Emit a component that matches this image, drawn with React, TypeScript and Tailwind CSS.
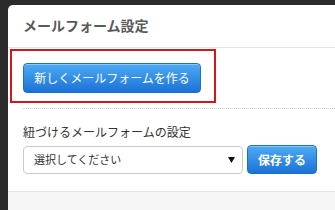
import React from 'react';

const font = { fontFamily: '"Noto Sans CJK JP", "Noto Sans", sans-serif' };

export default function App() {
  return (
    <div className="w-[335px] h-[210px] bg-[#2b2b2b] pl-[8px] pt-[5px] overflow-hidden" style={font}>
      <div className="bg-white rounded-tl-[5px] h-full flex flex-col">
        {/* Header */}
        <div className="h-[43px] shrink-0 border-b border-[#e5e5e5] pl-[15px] pb-[3px] flex items-center">
          <h3 className="text-[14px] font-bold text-[#5a5a5a] leading-none">メールフォーム設定</h3>
        </div>

        {/* Body */}
        <div className="flex-1 flex flex-col">
          <div className="ml-[2px] mt-[1px] w-[206px] h-[54px] border-2 border-[#d2161e] pl-[11px] pt-[12px]">
            <button className="w-[178px] h-[30px] rounded-[4px] border border-[#1f6fc5] bg-gradient-to-b from-[#4eaaf4] to-[#1a72d6] text-white text-[12px] leading-none shadow-[inset_0_1px_0_rgba(255,255,255,0.35)]">
              新しくメールフォームを作る
            </button>
          </div>

          <div className="ml-[15px] mt-[5px] border-t border-dotted border-[#d4d4d4]" />

          <div className="pl-[15px] pt-[17px]">
            <div className="text-[12px] text-[#333] leading-none">紐づけるメールフォームの設定</div>
            <div className="flex items-center gap-[4px] mt-[7px]">
              <div className="w-[220px] h-[28px] rounded-[4px] border border-[#cccccc] bg-white flex items-center justify-between pl-[10px] pr-[7px]">
                <span className="text-[11px] text-[#333] leading-none">選択してください</span>
                <svg width="7" height="6" viewBox="0 0 7 6">
                  <path d="M0 0 L7 0 L3.5 6 Z" fill="#111" />
                </svg>
              </div>
              <button className="w-[70px] h-[29px] rounded-[4px] border border-[#1f6fc5] bg-gradient-to-b from-[#4eaaf4] to-[#1a72d6] text-white text-[12px] font-bold leading-none shadow-[inset_0_1px_0_rgba(255,255,255,0.35)]">
                保存する
              </button>
            </div>
          </div>
        </div>

        {/* Footer */}
        <div className="h-[19px] shrink-0 border-t border-[#e5e5e5] bg-[#f5f5f5]" />
      </div>
    </div>
  );
}
